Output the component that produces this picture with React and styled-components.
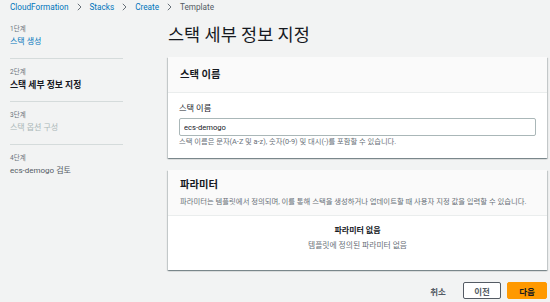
import React from "react";
import styled, { createGlobalStyle } from "styled-components";

const Global = createGlobalStyle`
  html, body { margin: 0; padding: 0; background: #f2f3f3; }
  body { font-family: Roboto, "Noto Sans CJK KR", sans-serif; color: #16191f; }
  * { box-sizing: border-box; }
`;

const Page = styled.div`
  width: 550px;
  height: 302px;
  overflow: hidden;
  background: #f2f3f3;
  padding: 0 3px 0 10px;
`;

const Crumbs = styled.nav`
  display: flex;
  align-items: center;
  height: 14px;
  font-size: 8.2px;
  gap: 8px;
`;

const Crumb = styled.span`
  color: ${(p) => (p.$current ? "#545b64" : "#0073bb")};
`;

const Chevron = () => (
  <svg width="5" height="8" viewBox="0 0 5 8">
    <polyline points="0.8,0.8 4,4 0.8,7.2" fill="none" stroke="#687078" strokeWidth="1" />
  </svg>
);

const Layout = styled.div`
  display: grid;
  grid-template-columns: 113px 379px;
  column-gap: 45px;
  margin-top: 9px;
`;

const Steps = styled.ol`
  list-style: none;
  margin: 0;
  padding: 1px 0 0;
`;

const Step = styled.li`
  padding: 0 0 10px;
  & + & {
    border-top: 1px solid #d5dbdb;
    padding-top: 8px;
  }
`;

const StepNum = styled.div`
  font-size: 6.5px;
  line-height: 10px;
  color: #687078;
`;

const StepTitle = styled.div`
  margin-top: 2px;
  font-size: ${(p) => (p.$state === "active" ? "8.8px" : "8px")};
  line-height: 12px;
  font-weight: ${(p) => (p.$state === "active" ? 700 : 400)};
  color: ${(p) =>
    p.$state === "active"
      ? "#16191f"
      : p.$state === "done"
      ? "#0073bb"
      : p.$state === "disabled"
      ? "#aab7b8"
      : "#545b64"};
`;

const Main = styled.main`
  display: flex;
  flex-direction: column;
`;

const Title = styled.h1`
  margin: 0;
  font-size: 17.5px;
  line-height: 24px;
  font-weight: 400;
  color: #16191f;
`;

const Card = styled.section`
  background: #fff;
  margin-top: ${(p) => p.$mt}px;
  box-shadow: 0 1px 1px 0 rgba(0, 28, 36, 0.3), 1px 1px 1px 0 rgba(0, 28, 36, 0.15),
    -1px 1px 1px 0 rgba(0, 28, 36, 0.15);
`;

const CardHeader = styled.header`
  background: #fafafa;
  border-bottom: 1px solid #eaeded;
  padding: ${(p) => p.$pad};
`;

const CardTitle = styled.h2`
  margin: 0;
  font-size: 10.3px;
  line-height: 14px;
  font-weight: 700;
  color: #16191f;
`;

const CardDesc = styled.p`
  margin: 5px 0 0;
  font-size: 7.35px;
  line-height: 10px;
  color: #687078;
  white-space: nowrap;
`;

const CardBody = styled.div`
  padding: ${(p) => p.$pad};
  text-align: ${(p) => p.$align || "left"};
`;

const Label = styled.label`
  display: block;
  font-size: 8.2px;
  line-height: 12px;
  color: #16191f;
`;

const Input = styled.input`
  display: block;
  width: 357px;
  height: 18px;
  margin-top: 4px;
  border: 1px solid #aab7b8;
  border-radius: 2px;
  padding: 0 4px;
  font-family: Roboto, "Noto Sans CJK KR", sans-serif;
  font-size: 7.6px;
  color: #16191f;
  background: #fff;
  outline: none;
`;

const Hint = styled.div`
  margin-top: 1px;
  font-size: 7.3px;
  line-height: 10px;
  color: #687078;
`;

const EmptyTitle = styled.div`
  font-size: 8px;
  line-height: 12px;
  font-weight: 700;
  color: #16191f;
`;

const EmptyText = styled.div`
  margin-top: 3px;
  font-size: 7.8px;
  line-height: 12px;
  color: #687078;
`;

const Actions = styled.div`
  display: flex;
  justify-content: flex-end;
  align-items: center;
  margin-top: 12px;
  gap: 6px;
`;

const Button = styled.button`
  height: 17px;
  padding: 0;
  width: ${(p) => p.$w}px;
  margin-right: ${(p) => p.$mr || 0}px;
  font-family: Roboto, "Noto Sans CJK KR", sans-serif;
  font-size: 8.5px;
  font-weight: 700;
  border-radius: 2px;
  cursor: pointer;
  color: ${(p) => (p.$variant === "primary" ? "#16191f" : "#545b64")};
  background: ${(p) =>
    p.$variant === "primary" ? "#ff9900" : p.$variant === "link" ? "transparent" : "#fff"};
  border: ${(p) =>
    p.$variant === "primary"
      ? "1px solid #ff9900"
      : p.$variant === "link"
      ? "1px solid transparent"
      : "1px solid #545b64"};
`;

export default function App() {
  return (
    <Page>
      <Global />
      <Crumbs>
        <Crumb>CloudFormation</Crumb>
        <Chevron />
        <Crumb>Stacks</Crumb>
        <Chevron />
        <Crumb>Create</Crumb>
        <Chevron />
        <Crumb $current>Template</Crumb>
      </Crumbs>
      <Layout>
        <Steps>
          <Step>
            <StepNum>1단계</StepNum>
            <StepTitle $state="done">스택 생성</StepTitle>
          </Step>
          <Step>
            <StepNum>2단계</StepNum>
            <StepTitle $state="active">스택 세부 정보 지정</StepTitle>
          </Step>
          <Step>
            <StepNum>3단계</StepNum>
            <StepTitle $state="disabled">스택 옵션 구성</StepTitle>
          </Step>
          <Step>
            <StepNum>4단계</StepNum>
            <StepTitle $state="normal">ecs-demogo 검토</StepTitle>
          </Step>
        </Steps>
        <Main>
          <Title>스택 세부 정보 지정</Title>
          <Card $mt={10}>
            <CardHeader $pad="11px 12px 10px">
              <CardTitle>스택 이름</CardTitle>
            </CardHeader>
            <CardBody $pad="9px 11px 11px">
              <Label>스택 이름</Label>
              <Input defaultValue="ecs-demogo" />
              <Hint>스택 이름은 문자(A-Z 및 a-z), 숫자(0-9) 및 대시(-)를 포함할 수 있습니다.</Hint>
            </CardBody>
          </Card>
          <Card $mt={12}>
            <CardHeader $pad="8px 12px 8px">
              <CardTitle>파라미터</CardTitle>
              <CardDesc>
                파라미터는 템플릿에서 정의되며, 이를 통해 스택을 생성하거나 업데이트할 때 사용자 지정 값을 입력할 수 있습니다.
              </CardDesc>
            </CardHeader>
            <CardBody $pad="9px 12px 18px" $align="center">
              <EmptyTitle>파라미터 없음</EmptyTitle>
              <EmptyText>템플릿에 정의된 파라미터 없음</EmptyText>
            </CardBody>
          </Card>
          <Actions>
            <Button $variant="link" $w={30} $mr={4}>취소</Button>
            <Button $w={38}>이전</Button>
            <Button $variant="primary" $w={40}>다음</Button>
          </Actions>
        </Main>
      </Layout>
    </Page>
  );
}
